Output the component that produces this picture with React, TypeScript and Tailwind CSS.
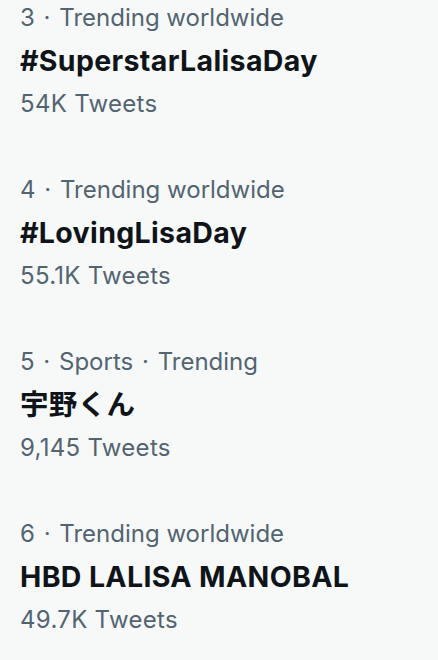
const trends = [
  { rank: '3', context: ['Trending worldwide'], title: '#SuperstarLalisaDay', count: '54K Tweets' },
  { rank: '4', context: ['Trending worldwide'], title: '#LovingLisaDay', count: '55.1K Tweets' },
  { rank: '5', context: ['Sports', 'Trending'], title: '宇野くん', count: '9,145 Tweets' },
  { rank: '6', context: ['Trending worldwide'], title: 'HBD LALISA MANOBAL', count: '49.7K Tweets' },
];

export default function App() {
  return (
    <div
      className="w-[438px] h-[660px] overflow-hidden bg-[#f7f9f9]"
      style={{ fontFamily: 'Inter, "Noto Sans CJK JP", sans-serif' }}
    >
      <div className="flex flex-col -mt-[26px]">
        {trends.map((t) => (
          <div key={t.title} className="px-5 py-[21.5px] flex flex-col">
            <span className="text-[24px] leading-[43px] text-[#536471] whitespace-pre">
              {[t.rank, ...t.context].map((part, i) => (
                <span key={part}>
                  {i > 0 && <span>{' '}<span className="px-[2px]">·</span>{' '}</span>}
                  {part}
                </span>
              ))}
            </span>
            <span className="text-[28.5px] leading-[43px] font-bold tracking-[0.35px] text-[#0f1419]">{t.title}</span>
            <span className="text-[24px] leading-[43px] tracking-[0.3px] text-[#536471]">{t.count}</span>
          </div>
        ))}
      </div>
    </div>
  );
}
